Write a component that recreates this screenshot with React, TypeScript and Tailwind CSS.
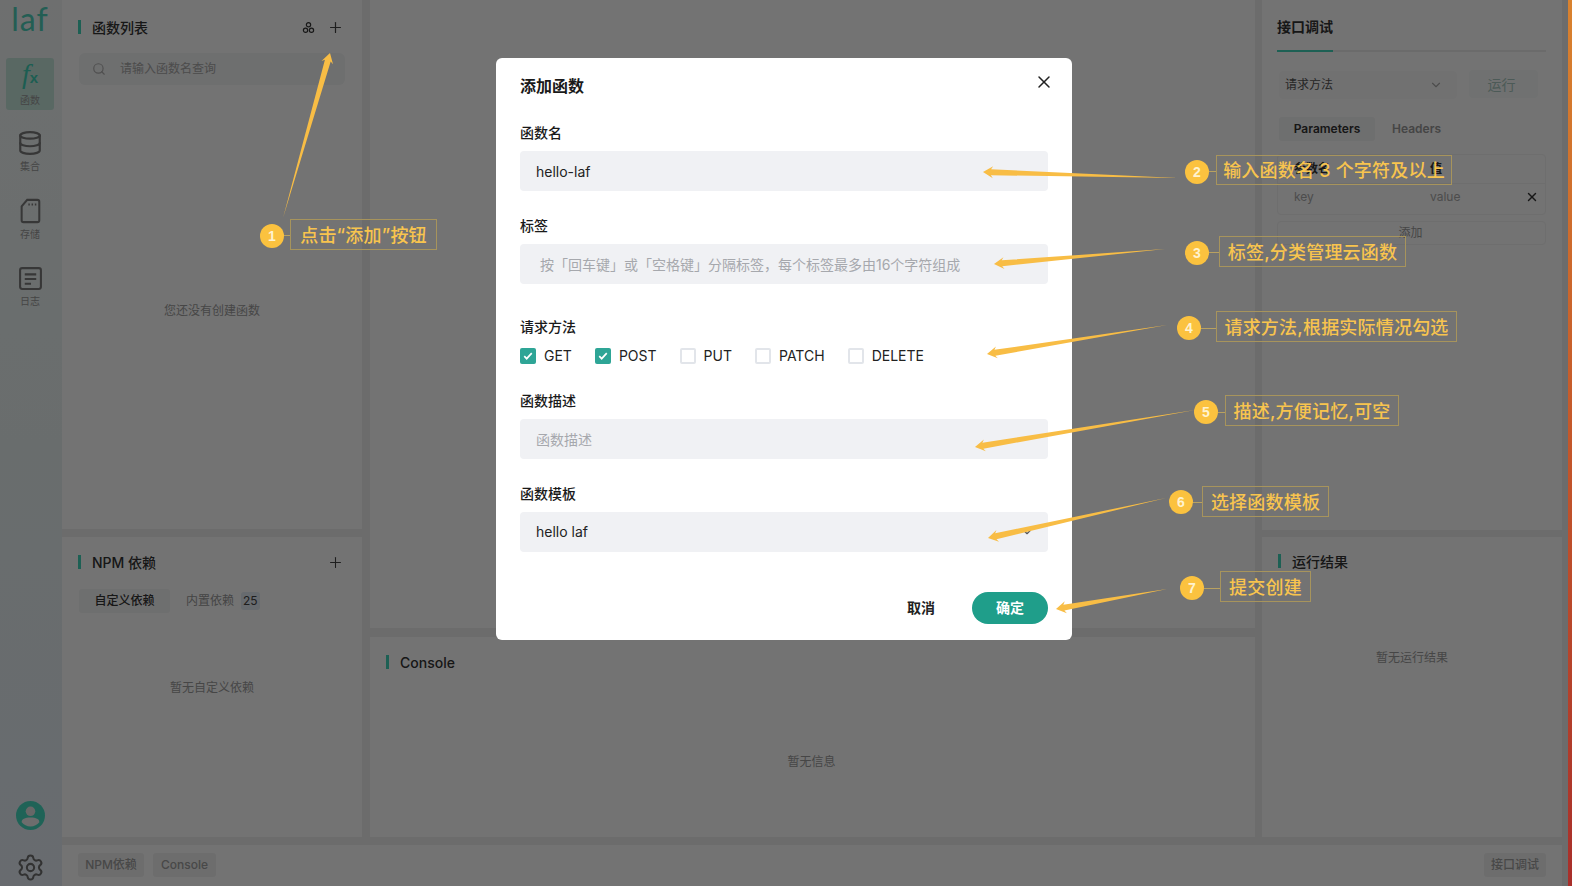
import { ChevronDown, Database, Plus, Search, Settings, X } from "lucide-react";
import type { ReactNode } from "react";

const fontStack = "font-['Inter','Noto_Sans_CJK_SC',sans-serif]";

const callouts = [
  { n: "1", text: "点击“添加”按钮", badge: "left-[260px] top-[224px]", box: "left-[290px] top-[219px] w-[147px] h-[31px]", line: "left-[283px] top-[235px] w-[7px]" },
  { n: "2", text: "输入函数名 3 个字符及以上", badge: "left-[1185px] top-[160px]", box: "left-[1216px] top-[155px] w-[236px] h-[30px]", line: "left-[1209px] top-[171px] w-[7px]" },
  { n: "3", text: "标签,分类管理云函数", badge: "left-[1185px] top-[241px]", box: "left-[1219px] top-[236px] w-[187px] h-[31px]", line: "left-[1208px] top-[252px] w-[11px]" },
  { n: "4", text: "请求方法,根据实际情况勾选", badge: "left-[1177px] top-[316px]", box: "left-[1216px] top-[311px] w-[241px] h-[31px]", line: "left-[1200px] top-[328px] w-[16px]" },
  { n: "5", text: "描述,方便记忆,可空", badge: "left-[1194px] top-[400px]", box: "left-[1225px] top-[395px] w-[174px] h-[31px]", line: "left-[1218px] top-[412px] w-[7px]" },
  { n: "6", text: "选择函数模板", badge: "left-[1169px] top-[490px]", box: "left-[1202px] top-[486px] w-[127px] h-[31px]", line: "left-[1192px] top-[502px] w-[10px]" },
  { n: "7", text: "提交创建", badge: "left-[1180px] top-[576px]", box: "left-[1220px] top-[571px] w-[91px] h-[31px]", line: "left-[1204px] top-[588px] w-[16px]" },
];

const arrows = [
  { from: [283, 218], to: [330, 53] },
  { from: [1178, 178], to: [983, 172] },
  { from: [1165, 249], to: [994, 264] },
  { from: [1167, 325], to: [987, 354] },
  { from: [1195, 410], to: [975, 447] },
  { from: [1166, 498], to: [988, 538] },
  { from: [1167, 589], to: [1056, 609] },
];

function arrowPoints(from: number[], to: number[]) {
  const dx = to[0] - from[0];
  const dy = to[1] - from[1];
  const len = Math.hypot(dx, dy);
  const ux = dx / len;
  const uy = dy / len;
  const px = -uy;
  const py = ux;
  const at = (back: number, side: number) =>
    `${to[0] - ux * back + px * side},${to[1] - uy * back + py * side}`;
  return [
    `${from[0]},${from[1]}`,
    at(8, 3),
    at(10, 6),
    `${to[0]},${to[1]}`,
    at(10, -6),
    at(8, -3),
  ].join(" ");
}

function PanelTitle({ children, right }: { children: ReactNode; right?: ReactNode }) {
  return (
    <div className="flex h-[28px] items-center justify-between pl-[16px] pr-[18px]">
      <div className="flex items-center gap-[11px]">
        <span className="h-[14px] w-[3px] bg-[#42d4ba]" />
        <span className="text-[14px] font-medium text-[#333333]">{children}</span>
      </div>
      {right}
    </div>
  );
}

function SideItem({ label, icon, active }: { label: string; icon: ReactNode; active?: boolean }) {
  return (
    <div className={`mx-[6px] flex h-[52px] w-[48px] flex-col items-center justify-center rounded-[3px] ${active ? "bg-[#c5e6dc]" : ""}`}>
      {icon}
      <span className="mt-[4px] text-[10px] leading-[13px] text-[#9a9a9a]">{label}</span>
    </div>
  );
}

function Field({ label, className, children }: { label: string; className?: string; children: ReactNode }) {
  return (
    <div className={className}>
      <p className="mb-[8px] text-[14px] font-medium leading-[21px] text-[#1a1a1a]">{label}</p>
      <div className="flex h-[40px] items-center justify-between rounded-[4px] bg-[#f0f1f4] px-[16px] text-[14px]">{children}</div>
    </div>
  );
}

function Method({ label, checked }: { label: string; checked?: boolean }) {
  return (
    <label className="flex items-center gap-[8px] text-[14px] text-[#222222]">
      <span className={`flex h-[16px] w-[16px] items-center justify-center rounded-[2px] ${checked ? "bg-[#2ea596]" : "border-2 border-[#e2e5ea] bg-white"}`}>
        {checked ? (
          <svg viewBox="0 0 12 10" className="h-[10px] w-[10px]" fill="none" stroke="#ffffff" strokeWidth="2">
            <path d="M1.5 5.2 4.4 8.2 10.5 1.5" />
          </svg>
        ) : null}
      </span>
      {label}
    </label>
  );
}

export default function App() {
  return (
    <div className={`relative flex h-[886px] w-[1572px] overflow-hidden bg-[#f0f0f0] ${fontStack}`}>
      <aside className="flex w-[62px] shrink-0 flex-col bg-gradient-to-b from-[#f3f6f6] via-[#e9f2f2] to-[#e6eef6]">
        <div className="flex h-[58px] justify-center pr-[2px] font-['Lato',sans-serif] text-[32px] font-normal leading-[38px] tracking-[1px] text-[#4fd0bb]">laf</div>
        <SideItem
          active
          label="函数"
          icon={
            <span className="font-['Liberation_Serif',serif] text-[28px] italic leading-[24px] text-[#3fd0b5]">
              f<span className="font-['Liberation_Sans',sans-serif] text-[15px] font-bold not-italic">x</span>
            </span>
          }
        />
        <div className="mt-[15px]">
          <SideItem label="集合" icon={<Database size={26} strokeWidth={2} className="text-[#7a7a7a]" />} />
        </div>
        <div className="mt-[16px]">
          <SideItem
            label="存储"
            icon={
              <svg viewBox="0 0 24 28" className="h-[26px] w-[24px]" fill="none" stroke="#7a7a7a" strokeWidth="2.2">
                <path d="M9 2h11a2 2 0 0 1 2 2v20a2 2 0 0 1-2 2H5a2 2 0 0 1-2-2V9Z" />
                <path d="M11 6v2M14.5 6v2M18 6v2" strokeWidth="1.6" />
              </svg>
            }
          />
        </div>
        <div className="mt-[16px]">
          <SideItem
            label="日志"
            icon={
              <svg viewBox="0 0 24 24" className="h-[25px] w-[25px]" fill="none" stroke="#7a7a7a" strokeWidth="2">
                <rect x="2" y="2" width="20" height="20" rx="2" />
                <path d="M6.5 8h11M6.5 12.5h11M6.5 17h6" />
              </svg>
            }
          />
        </div>
        <div className="mt-auto flex flex-col items-center gap-[23px] pb-[4px] pr-[2px]">
          <svg viewBox="0 0 28 28" className="h-[29px] w-[29px]">
            <circle cx="14" cy="14" r="14" fill="#46dcc2" />
            <circle cx="14" cy="10" r="4.6" fill="#e4e4e4" />
            <path d="M5.5 20.5c0-3 3-4.5 8.5-4.5s8.5 1.500 8.500 4.500c-2 2.700-5 4-8.500 4s-6.500-1.300-8.500-4Z" fill="#f2f2f2" />
          </svg>
          <Settings size={29} strokeWidth={1.7} className="text-[#707070]" />
        </div>
      </aside>

      <main className="flex w-[1506px] flex-col pr-[6px]">
        <div className="flex h-[837px]">
          <div className="flex w-[300px] flex-col gap-[8px]">
            <section className="relative h-[529px] bg-white pt-[13px]">
              <PanelTitle
                right={
                  <div className="flex items-center gap-[12px] text-[#444444]">
                    <svg viewBox="0 0 14 14" className="h-[13px] w-[13px]" fill="none" stroke="#333333" strokeWidth="1.3">
                      <circle cx="7" cy="4" r="2.3" />
                      <circle cx="3.800" cy="10" r="2.300" />
                      <circle cx="10.200" cy="10" r="2.300" />
                    </svg>
                    <Plus size={17} strokeWidth={1.7} />
                  </div>
                }
              >
                函数列表
              </PanelTitle>
              <div className="mx-[17px] mt-[12px] flex h-[32px] items-center gap-[14px] rounded-[6px] bg-[#f4f5f6] pl-[13px] text-[12px] text-[#a8a8a8]">
                <Search size={14} className="text-[#b0b0b0]" />
                请输入函数名查询
              </div>
              <p className="mt-[217px] text-center text-[12px] leading-[18px] text-[#9c9c9c]">您还没有创建函数</p>
            </section>
            <section className="flex-1 bg-white pt-[11px]">
              <PanelTitle right={<Plus size={17} strokeWidth={1.5} className="text-[#444444]" />}>NPM 依赖</PanelTitle>
              <div className="mt-[13px] flex items-center pl-[17px] text-[12px]">
                <span className="flex h-[24px] w-[91px] items-center justify-center rounded-[3px] bg-[#f4f5f6] font-medium text-[#333333]">自定义依赖</span>
                <span className="ml-[16px] text-[#999999]">内置依赖</span>
                <span className="ml-[7px] rounded-[3px] bg-[#e4edf6] px-[2px] text-[#444444]">25</span>
              </div>
              <p className="mt-[66px] text-center text-[12px] leading-[18px] text-[#9c9c9c]">暂无自定义依赖</p>
            </section>
          </div>

          <div className="ml-[8px] flex w-[885px] flex-col gap-[9px]">
            <section className="h-[628px] bg-white" />
            <section className="flex-1 bg-white pt-[11px]">
              <PanelTitle>Console</PanelTitle>
              <p className="mt-[77px] pr-[2px] text-center text-[12px] leading-[18px] text-[#9c9c9c]">暂无信息</p>
            </section>
          </div>

          <div className="ml-[7px] flex w-[300px] flex-col gap-[7px]">
            <section className="h-[530px] bg-white pl-[15px] pr-[16px] pt-[16px]">
              <div className="flex border-b-2 border-[#eeeeee] pr-[2px]">
                <span className="-mb-[2px] border-b-2 border-[#42d4ba] pb-[13px] text-[14px] font-semibold leading-[21px] text-[#333333]">接口调试</span>
              </div>
              <div className="mt-[19px] flex h-[28px] items-center gap-[12px] pl-[2px] pr-[8px]">
                <div className="flex h-full w-[178px] items-center justify-between rounded-[4px] bg-[#fbfbfb] px-[6px] pr-[14px] text-[12px] text-[#555555]">
                  请求方法
                  <ChevronDown size={14} className="text-[#aaaaaa]" />
                </div>
                <div className="-mt-[2px] flex h-full flex-1 items-center justify-center rounded-[4px] bg-[#f8fbfa] pr-[4px] text-[14px] text-[#a8c8c0]">运行</div>
              </div>
              <div className="mt-[18px] flex items-center pl-[2px] text-[12px] font-semibold">
                <span className="flex h-[24px] w-[96px] items-center justify-center rounded-[3px] bg-[#f4f5f6] text-[#333333]">Parameters</span>
                <span className="ml-[17px] text-[#999999]">Headers</span>
              </div>
              <div className="mt-[13px] rounded-[4px] border border-[#f3f3f3]">
                <div className="flex h-[29px] items-center border-b border-[#f3f3f3] text-[12px] font-semibold text-[#333333]">
                  <span className="ml-[16px] w-[136px]">参数名</span>
                  <span>值</span>
                </div>
                <div className="mb-[4px] flex h-[26px] items-center text-[12px] text-[#aaaaaa]">
                  <span className="ml-[16px] w-[136px]">key</span>
                  <span>value</span>
                  <X size={14} strokeWidth={2.4} className="ml-auto mr-[6px] text-[#333333]" />
                </div>
              </div>
              <div className="mt-[6px] flex h-[24px] items-center justify-center rounded-[4px] border border-[#f3f3f3] pr-[2px] text-[12px] text-[#9c9c9c]">添加</div>
            </section>
            <section className="flex-1 bg-white pt-[10px]">
              <PanelTitle>运行结果</PanelTitle>
              <p className="mt-[74px] text-center text-[12px] leading-[18px] text-[#9c9c9c]">暂无运行结果</p>
            </section>
          </div>
        </div>

        <footer className="mt-[8px] flex h-[41px] items-center gap-[9px] bg-white px-[16px] pb-[2px] text-[12px] font-medium text-[#a0a0a0]">
          <span className="flex h-[24px] w-[66px] items-center justify-center rounded-[3px] bg-[#f2f2f2]">NPM依赖</span>
          <span className="flex h-[24px] w-[63px] items-center justify-center rounded-[3px] bg-[#f2f2f2]">Console</span>
          <span className="ml-auto flex h-[24px] w-[62px] items-center justify-center rounded-[3px] bg-[#f2f2f2]">接口调试</span>
        </footer>
      </main>

      <div className="absolute inset-0 bg-black/55" />
      <div className="relative z-10 w-[4px] shrink-0 bg-gradient-to-b from-[#d9822e] via-[#c4572a] to-[#a82e2a]" />

      <div className="absolute left-[496px] top-[58px] z-20 h-[582px] w-[576px] rounded-[6px] bg-white px-[24px]">
        <h2 className="pt-[16px] text-[16px] font-semibold leading-[24px] text-[#1a1a1a]">添加函数</h2>
        <X size={20} strokeWidth={1.8} className="absolute right-[18px] top-[14px] text-[#222222]" />
        <Field label="函数名" className="mt-[24px]">
          <span className="text-[#222222]">hello-laf</span>
        </Field>
        <Field label="标签" className="mt-[24px]">
          <span className="pl-[4px] text-[#a6a8ad]">按「回车键」或「空格键」分隔标签，每个标签最多由16个字符组成</span>
        </Field>
        <p className="mt-[32px] text-[14px] font-medium leading-[21px] text-[#1a1a1a]">请求方法</p>
        <div className="mt-[8px] flex h-[21px] gap-[23px]">
          <Method checked label="GET" />
          <Method checked label="POST" />
          <Method label="PUT" />
          <Method label="PATCH" />
          <Method label="DELETE" />
        </div>
        <Field label="函数描述" className="mt-[24px]">
          <span className="text-[#a6a8ad]">函数描述</span>
        </Field>
        <Field label="函数模板" className="mt-[24px]">
          <span className="-mt-[2px] text-[#222222]">hello laf</span>
          <ChevronDown size={14} className="-mr-[2px] text-[#555555]" />
        </Field>
        <div className="mt-[40px] flex items-center justify-end">
          <span className="mb-[2px] mr-[37px] text-[14px] font-semibold text-[#222222]">取消</span>
          <span className="flex h-[32px] w-[76px] items-center justify-center rounded-full bg-[#1f9e8a] pb-[2px] text-[14px] font-semibold text-white">确定</span>
        </div>
      </div>

      <svg viewBox="0 0 1572 886" className="pointer-events-none absolute inset-0 z-30 h-[886px] w-[1572px]">
        {arrows.map((arrow) => (
          <polygon key={arrow.to.join()} points={arrowPoints(arrow.from, arrow.to)} fill="#f8bd45" />
        ))}
      </svg>

      {callouts.map((c) => (
        <div key={c.n} className="contents">
          <span className={`absolute z-30 h-px bg-[#b9a160] ${c.line}`} />
          <span className={`absolute z-30 flex h-[24px] w-[24px] items-center justify-center rounded-full bg-[#fbc23f] font-['Liberation_Sans',sans-serif] text-[14px] font-bold text-[#fff3cf] ${c.badge}`}>
            {c.n}
          </span>
          <span className={`absolute z-30 flex items-center justify-center whitespace-nowrap border border-[#a7945c] pt-[1px] text-[18px] font-medium tracking-[0.2px] text-[#f8c44e] ${c.box}`}>
            {c.text}
          </span>
        </div>
      ))}
    </div>
  );
}
